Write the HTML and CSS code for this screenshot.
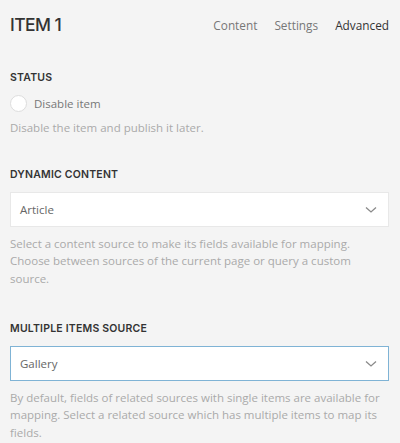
FILE: index.html
```html
<!DOCTYPE html>
<html lang="en">

<head>
    <meta charset="UTF-8">
    <meta name="viewport" content="width=device-width, initial-scale=1.0">
    <title>Item 1</title>
    <link rel="stylesheet" href="styles.css">
</head>

<body>
    <div class="panel">
        <div class="panel-header">
            <h2 class="panel-title">ITEM 1</h2>
            <nav class="tabs">
                <a href="#" class="tab">Content</a>
                <a href="#" class="tab">Settings</a>
                <a href="#" class="tab active">Advanced</a>
            </nav>
        </div>

        <div class="field field-first">
            <h3 class="field-label">STATUS</h3>
            <label class="check">
                <span class="radio"></span>
                <span class="check-text">Disable item</span>
            </label>
            <p class="field-help help-short">Disable the item and publish it later.</p>
        </div>

        <div class="field">
            <h3 class="field-label">DYNAMIC CONTENT</h3>
            <div class="select">
                <span class="select-value">Article</span>
                <svg class="chevron" width="12" height="8" viewBox="0 0 12 8">
                    <polyline points="1,1.5 6,6 11,1.5" fill="none" stroke="#8a8a8a" stroke-width="1.3"/>
                </svg>
            </div>
            <p class="field-help">Select a content source to make its fields available for mapping. Choose between sources of the current page or query a custom source.</p>
        </div>

        <div class="field field-last">
            <h3 class="field-label">MULTIPLE ITEMS SOURCE</h3>
            <div class="select focus">
                <span class="select-value">Gallery</span>
                <svg class="chevron" width="12" height="8" viewBox="0 0 12 8">
                    <polyline points="1,1.5 6,6 11,1.5" fill="none" stroke="#8a8a8a" stroke-width="1.3"/>
                </svg>
            </div>
            <p class="field-help">By default, fields of related sources with single items are available for mapping. Select a related source which has multiple items to map its fields.</p>
        </div>
    </div>
</body>

</html>
```

FILE: styles.css
```css
body {
    margin: 0;
    padding: 0;
    background: #f4f4f4;
    font-family: "Open Sans", sans-serif;
    color: #444;
}

.panel {
    padding: 0 11px 0 10px;
}

.panel-header {
    display: flex;
    align-items: center;
    justify-content: space-between;
    height: 48px;
}

.panel-title {
    margin: 0;
    font-family: "Inter", sans-serif;
    font-size: 17.5px;
    font-weight: 500;
    letter-spacing: -0.6px;
    color: #333;
}

.tabs {
    display: flex;
    gap: 17px;
    padding-top: 1px;
}

.tab {
    font-size: 11.8px;
    color: #777;
    text-decoration: none;
}

.tab.active {
    color: #333;
}

.field {
    margin-top: 31.5px;
}

.field-first {
    margin-top: 23px;
}

.field-last {
    margin-top: 35px;
}

.field-label {
    margin: 0 0 10px;
    font-family: "Inter", sans-serif;
    font-size: 10.5px;
    line-height: 14px;
    font-weight: 600;
    letter-spacing: 0.2px;
    color: #333;
}

.check {
    display: flex;
    align-items: center;
    gap: 7px;
    height: 22px;
    margin-top: -3px;
}

.radio {
    width: 15px;
    height: 15px;
    border: 1px solid #ddd;
    border-radius: 50%;
    background: #fff;
}

.check-text {
    font-size: 11.5px;
    color: #777;
}

.field-help {
    margin: 7.5px 0 0;
    font-size: 11.5px;
    line-height: 17.5px;
    color: #aaa;
}

.help-short {
    margin-top: 5px;
}

.select {
    display: flex;
    align-items: center;
    justify-content: space-between;
    height: 33px;
    padding: 0 11px 0 9px;
    background: #fff;
    border: 1px solid #e8e8e8;
}

.select.focus {
    border-color: #7fb3d5;
}

.select-value {
    font-size: 11.5px;
    color: #666;
}
```
